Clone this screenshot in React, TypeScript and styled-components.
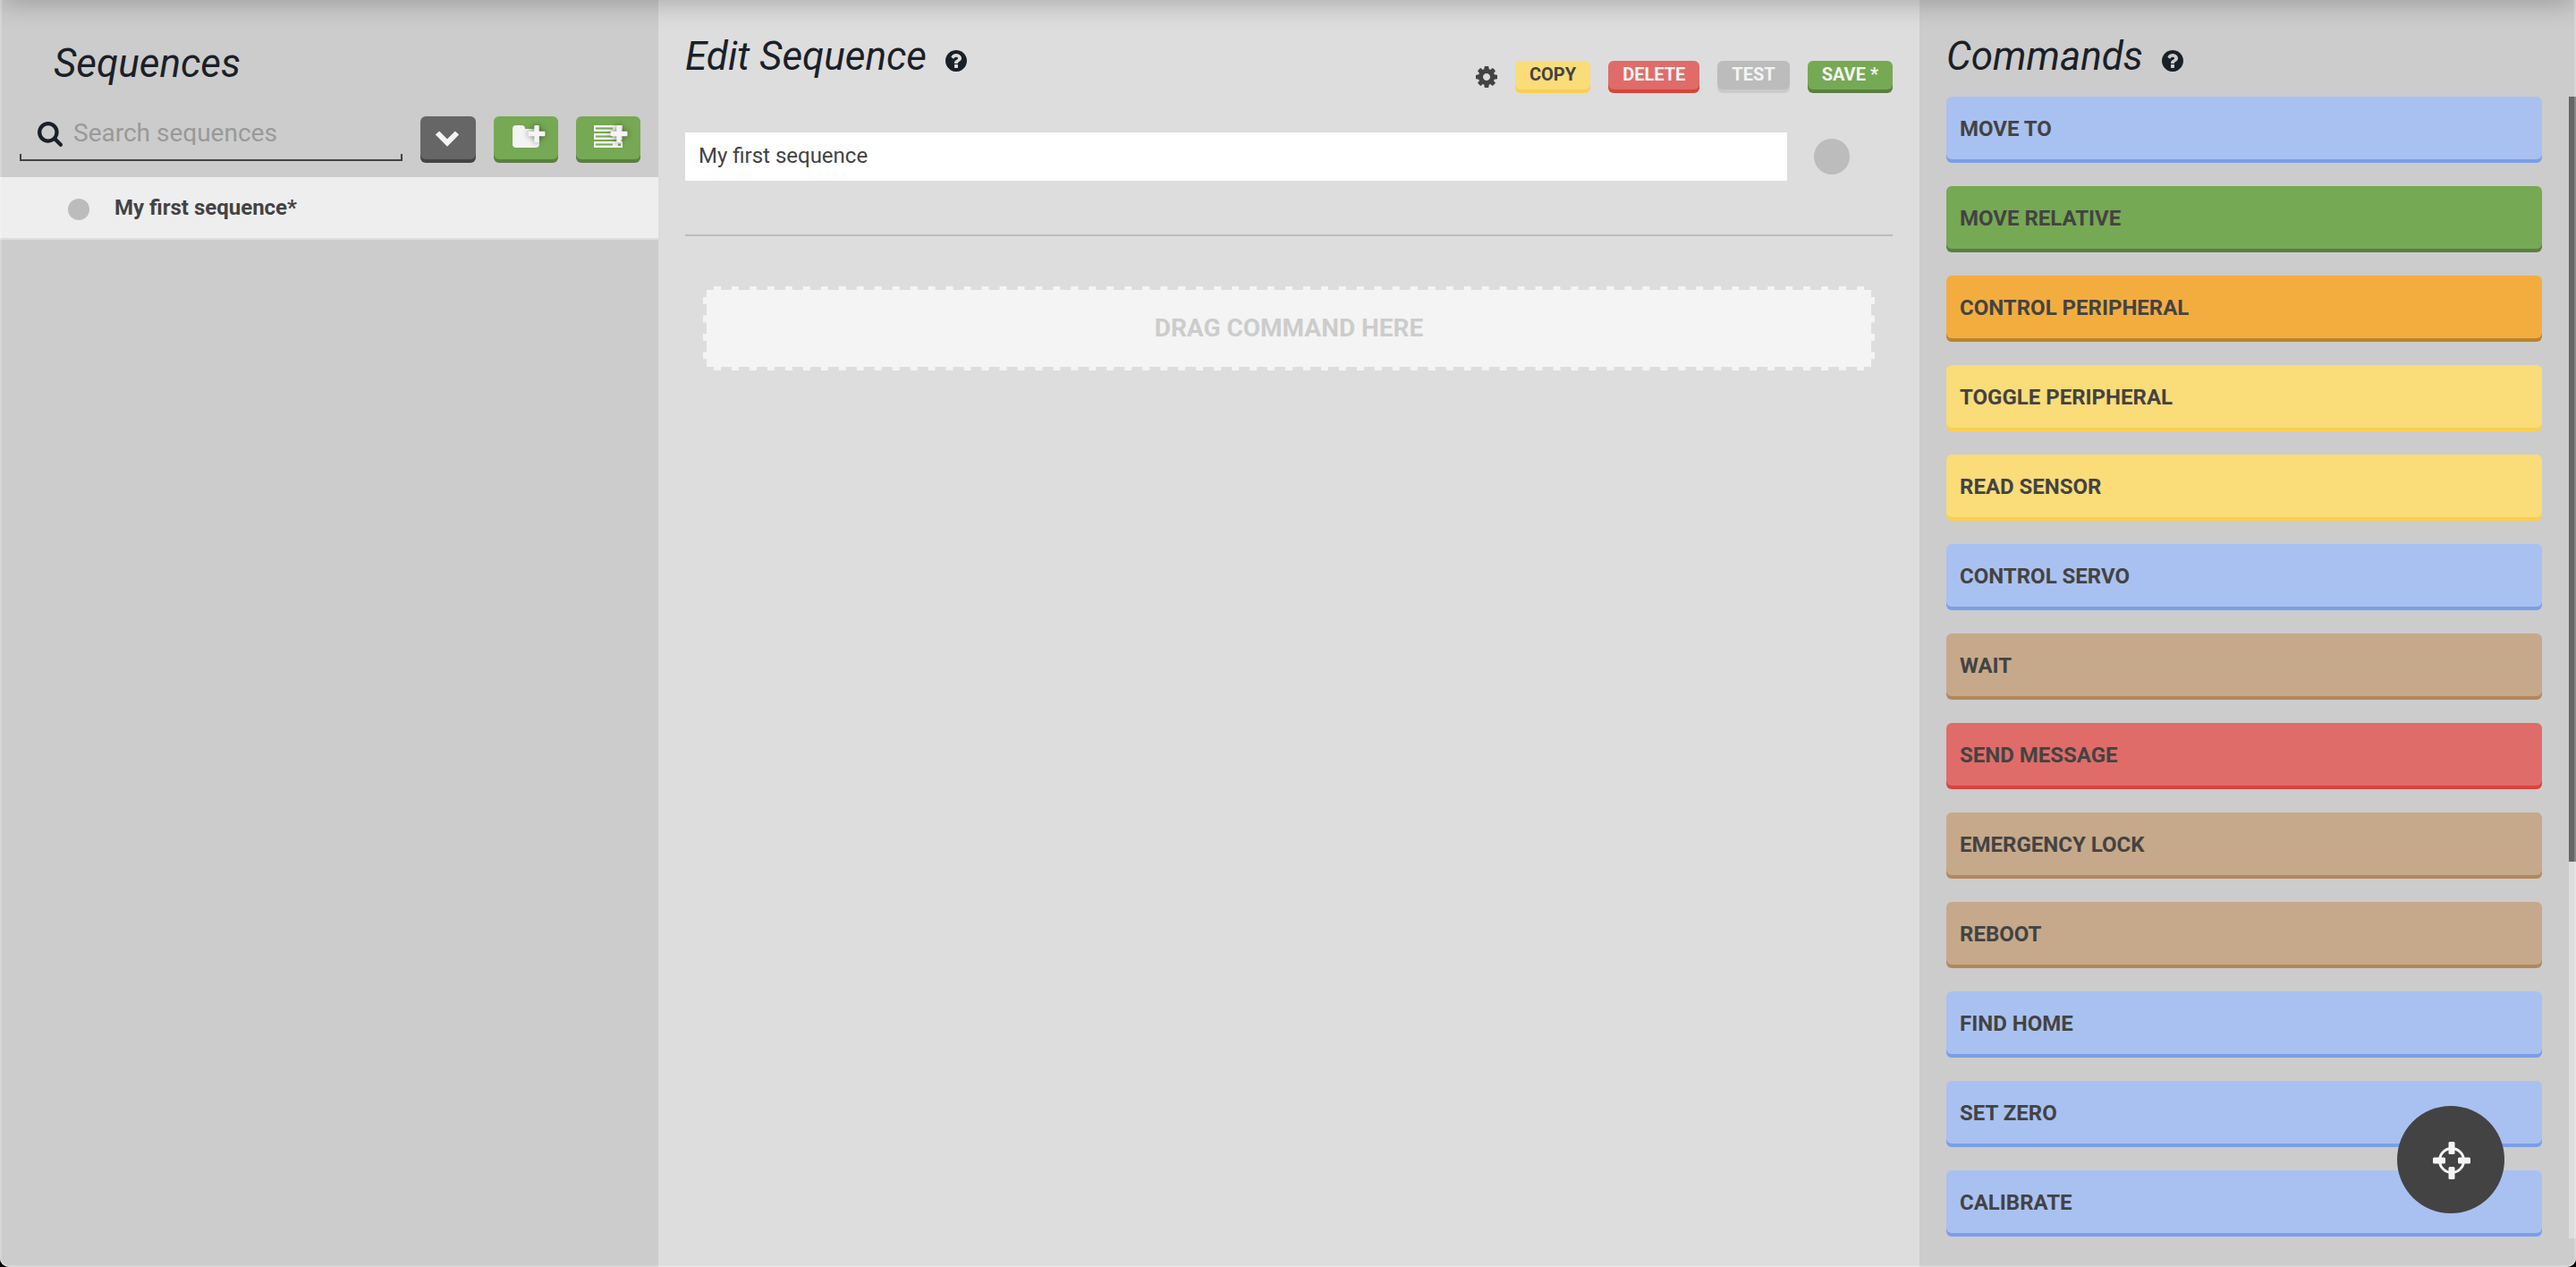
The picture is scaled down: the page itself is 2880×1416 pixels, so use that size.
import React, { useState } from "react";
import styled, { createGlobalStyle } from "styled-components";

const Global = createGlobalStyle`
  * { box-sizing: border-box; }
  html, body { margin: 0; background: #000; }
  body { font-family: Roboto, "Liberation Sans", sans-serif; color: #434343; font-size: 24px; line-height: 28px; overflow: hidden; }
  button, input { font: inherit; color: inherit; border: 0; margin: 0; }
  button { cursor: pointer; }
  svg { display: block; }
`;

const palette = {
  blue: ["#a9c1f0", "#7a9fe8"],
  green: ["#76a953", "#5a7f41"],
  orange: ["#f3ad3f", "#bc832c"],
  yellow: ["#fadc79", "#f9cf50"],
  brown: ["#c6a98a", "#b3875c"],
  red: ["#df6c69", "#d9433c"],
  gray: ["#bcbcbc", "#cacaca"],
  dark: ["#666666", "#434343"],
} as const;
type Tone = keyof typeof palette;

const Frame = styled.div`
  position: relative;
  display: grid;
  grid-template-columns: minmax(0, 736fr) minmax(0, 1410fr) minmax(0, 734fr);
  height: 100vh;
  overflow: hidden;
  background: #ddd;
  border-radius: 0 0 10px 10px;
`;

const NavShadow = styled.div`
  position: absolute;
  top: -20px;
  left: 0;
  right: 0;
  height: 20px;
  box-shadow: 0 0 30px 0 rgba(0, 0, 0, 0.34);
  pointer-events: none;
`;

const WindowEdge = styled.div`
  position: absolute;
  inset: 0;
  border: 2px solid rgba(255, 255, 255, 0.22);
  border-top: 0;
  border-radius: 0 0 10px 10px;
  pointer-events: none;
`;

const SidePanel = styled.aside`
  background: #ccc;
  min-width: 0;
`;

const SequencePanel = styled(SidePanel)`
  padding-top: 44px;
`;

const Title = styled.h2`
  margin: 0;
  font-size: 44px;
  line-height: 54px;
  font-weight: 400;
  font-style: italic;
  color: #1a2027;
  white-space: nowrap;
`;

const SequenceTitle = styled(Title)`
  padding-left: 60px;
`;

const Tools = styled.div`
  display: flex;
  align-items: flex-start;
  gap: 20px;
  padding: 32px 20px 18px 22px;
`;

const Search = styled.label`
  flex: 1;
  min-width: 0;
  display: flex;
  align-items: flex-start;
  gap: 12px;
  height: 50px;
  padding: 6px 0 0 20px;
  color: #1a2027;
  border-bottom: 2px solid #434343;
  background:
    linear-gradient(#434343, #434343) 0 100% / 2px 6px no-repeat,
    linear-gradient(#434343, #434343) 100% 100% / 2px 6px no-repeat;
`;

const SearchInput = styled.input`
  flex: 1;
  min-width: 0;
  height: 28px;
  padding: 0;
  margin-top: -2px;
  font-size: 28px;
  line-height: 28px;
  background: none;
  outline: none;
  color: #434343;
  &::placeholder { color: #999; opacity: 1; }
`;

const IconButton = styled.button<{ $tone: Tone; $wide?: boolean }>`
  display: flex;
  justify-content: center;
  align-items: center;
  width: ${(p) => (p.$wide ? 72 : 62)}px;
  height: 48px;
  padding: 0;
  border-radius: 6px;
  color: #f4f4f4;
  background: ${(p) => palette[p.$tone][0]};
  box-shadow: 0 4px 0 ${(p) => palette[p.$tone][1]};
`;

const SequenceList = styled.ul`
  list-style: none;
  margin: 0;
  padding: 0;
`;

const SequenceRow = styled.li`
  display: flex;
  align-items: center;
  height: 70px;
  padding: 4px 0 0 76px;
  background: #eee;
  border-bottom: 2px solid #ddd;
`;

const SequenceLink = styled.a`
  padding: 0 0 4px 28px;
  font-weight: 700;
  color: #434343;
  text-decoration: none;
`;

const ColorDot = styled.button<{ $size: number }>`
  width: ${(p) => p.$size}px;
  height: ${(p) => p.$size}px;
  padding: 0;
  border-radius: 50%;
  background: #bcbcbc;
`;

const Editor = styled.main`
  min-width: 0;
  padding: 36px 30px 0;
`;

const TitleBar = styled.header`
  display: flex;
  align-items: flex-start;
  justify-content: space-between;
  height: 72px;
`;

const TitleGroup = styled.div`
  display: flex;
  gap: 21px;
`;

const PlainButton = styled.button`
  display: flex;
  padding: 0;
  margin-top: 20px;
  height: 24px;
  background: none;
  color: #1a2027;
`;

const Actions = styled.div`
  display: flex;
  align-items: flex-start;
  gap: 20px;
  padding-top: 32px;
`;

const GearButton = styled.button`
  display: flex;
  padding: 6px 0 0;
  background: none;
`;

const ActionButton = styled.button<{ $tone: Tone; $dark?: boolean }>`
  height: 32px;
  padding: 0 16px 2px;
  border-radius: 6px;
  font-size: 20px;
  line-height: 30px;
  font-weight: 700;
  text-transform: uppercase;
  white-space: nowrap;
  color: ${(p) => (p.$dark ? "#434343" : "#f4f4f4")};
  background: ${(p) => palette[p.$tone][0]};
  box-shadow: 0 4px 0 ${(p) => palette[p.$tone][1]};
`;

const NameRow = styled.div`
  display: flex;
  align-items: center;
  gap: 30px;
  margin-top: 40px;
  padding-right: 48px;
`;

const NameInput = styled.input`
  flex: 1;
  min-width: 0;
  height: 54px;
  padding: 0 15px 2px;
  background: #fff;
  outline: none;
`;

const Rule = styled.hr`
  height: 2px;
  margin: 60px 0 56px;
  border: 0;
  background: #bcbcbc;
`;

const DropArea = styled.div`
  position: relative;
  margin: 0 20px;
  height: 94px;
  border: 4px solid transparent;
  background: #f4f4f4;
  background-clip: padding-box;
  display: flex;
  align-items: center;
  justify-content: center;
  font-size: 28px;
  line-height: 32px;
  font-weight: 700;
  color: #ccc;

  &::before, &::after { content: ""; position: absolute; }
  &::before {
    inset: -4px -4px -4px 8px;
    background:
      linear-gradient(90deg, #f4f4f4 40%, transparent 40%) 0 0 / 20px 4px,
      linear-gradient(90deg, #f4f4f4 40%, transparent 40%) 0 100% / 20px 4px;
    background-repeat: round no-repeat;
  }
  &::after {
    inset: 8px -4px -4px -4px;
    background:
      linear-gradient(#f4f4f4 40%, transparent 40%) 0 0 / 4px 20px,
      linear-gradient(#f4f4f4 40%, transparent 40%) 100% 0 / 4px 20px;
    background-repeat: no-repeat round;
  }
`;

const CommandPanel = styled(SidePanel)`
  padding: 36px 0 32px 30px;
  display: flex;
  flex-direction: column;
`;

const CommandScroll = styled.div`
  display: flex;
  gap: 30px;
  flex: 1;
  min-height: 0;
  margin-top: 18px;
  overflow: hidden;
`;

const CommandList = styled.div`
  flex: 1;
  min-width: 0;
  display: flex;
  flex-direction: column;
  gap: 30px;
`;

const CommandButton = styled.button<{ $tone: Tone }>`
  flex: none;
  height: 70px;
  padding: 2px 15px 0;
  border-radius: 6px;
  text-align: left;
  font-weight: 700;
  text-transform: uppercase;
  background: ${(p) => palette[p.$tone][0]};
  box-shadow: 0 4px 0 ${(p) => palette[p.$tone][1]};
`;

const ScrollTrack = styled.div`
  width: 8px;
  background: #ddd;
`;

const ScrollThumb = styled.div`
  height: 67%;
  background: #666;
`;

const MoveButton = styled.button`
  position: absolute;
  right: 80px;
  bottom: 60px;
  width: 120px;
  height: 120px;
  padding: 2px 0 0 1px;
  border-radius: 50%;
  display: flex;
  align-items: center;
  justify-content: center;
  background: #434343;
`;

const SearchIcon = () => (
  <svg width="28" height="28" viewBox="0 0 1664 1664" fill="currentColor" aria-hidden="true">
    <path d="M1152 704q0-185-131.5-316.500t-316.500-131.500-316.500 131.500-131.500 316.500 131.500 316.500 316.500 131.500 316.500-131.500 131.500-316.500zM1664 1536q0 52-38 90t-90 38q-54 0-90-38l-343-342q-179 124-399 124-143 0-273.500-55.500t-225-150-150-225-55.500-273.500 55.500-273.500 150-225 225-150 273.500-55.500 273.500 55.500 225 150 150 225 55.500 273.500q0 220-124 399l343 343q37 37 37 90z" />
  </svg>
);

const HelpIcon = () => (
  <svg width="24" height="24" viewBox="0 0 1536 1536" fill="currentColor" aria-hidden="true">
    <path d="M896 1248v-192q0-14-9-23t-23-9h-192q-14 0-23 9t-9 23v192q0 14 9 23t23 9h192q14 0 23-9t9-23zM1152 576q0-88-55.500-163t-138.500-116-170-41q-243 0-371 213-15 24 8 42l132 100q7 6 19 6 16 0 25-12 53-68 86-92 34-24 86-24 48 0 85.500 26t37.500 59q0 38-20 61t-68 45q-63 28-115.500 86.500t-52.500 125.500v36q0 14 9 23t23 9h192q14 0 23-9t9-23q0-19 21.500-49.500t54.500-49.500q32-18 49-28.500t46-35 44.500-48 28-60.500 12.500-81zM1536 768q0 209-103 385.500t-279.500 279.500-385.500 103-385.500-103-279.500-279.500-103-385.500 103-385.500 279.500-279.500 385.500-103 385.500 103 279.500 279.500 103 385.500z" />
  </svg>
);

const GearIcon = () => (
  <svg width="24" height="24" viewBox="0 0 1536 1536" fill="currentColor" aria-hidden="true">
    <path d="M1024 768q0-106-75-181t-181-75-181 75-75 181 75 181 181 75 181-75 75-181zM1536 659v222q0 12-8 23t-20 13l-185 28q-19 54-39 91 35 50 107 138 10 12 10 25t-9 23q-27 37-99 108t-94 71q-12 0-26-9l-138-108q-44 23-91 38-16 136-29 186-7 28-36 28h-222q-14 0-24.500-8.500t-11.500-21.500l-28-184q-49-16-90-37l-141 107q-10 9-25 9-14 0-25-11-126-114-165-168-7-10-7-23 0-12 8-23 15-21 51-66.500t54-70.500q-27-50-41-99l-183-27q-13-2-21-12.500t-8-23.500v-222q0-12 8-23t19-13l186-28q14-46 39-92-40-57-107-138-10-12-10-24 0-10 9-23 26-36 98.500-107.500t94.500-71.500q13 0 26 10l138 107q44-23 91-38 16-136 29-186 7-28 36-28h222q14 0 24.500 8.500t11.500 21.500l28 184q49 16 90 37l142-107q9-9 24-9 13 0 25 10 129 119 165 170 7 8 7 22 0 12-8 23-15 21-51 66.500t-54 70.500q26 50 41 98l183 28q13 2 21 12.500t8 23.500z" />
  </svg>
);

const ChevronIcon = () => (
  <svg width="30" height="20" viewBox="0 0 30 20" aria-hidden="true">
    <path d="M3 4.500l11 11L25 4.500" fill="none" stroke="currentColor" strokeWidth="6" />
  </svg>
);

const PlusShape = styled.g`
  filter: drop-shadow(0 0 3px rgba(0, 0, 0, 0.5));
`;

const PlusMark = () => (
  <PlusShape fill="currentColor">
    <path d="M26.500 0h3q1.200 0 1.200 1.200V6.800h5.600q1.200 0 1.200 1.200v3q0 1.200-1.200 1.200h-5.600v5.800q0 1.200-1.200 1.200h-3q-1.200 0-1.200-1.200v-5.800h-5.600q-1.200 0-1.200-1.200v-3q0-1.200 1.200-1.200h5.600V1.200q0-1.200 1.200-1.200z" />
  </PlusShape>
);

const FolderPlusIcon = () => (
  <svg width="32" height="28" viewBox="0 0 32 28" overflow="visible" aria-hidden="true">
    <path d="M5 0h6q4 0 4 4h12q4 0 4 4v13q0 4-4 4H5q-4 0-4-4V4q0-4 4-4z" fill="currentColor" />
    <PlusMark />
  </svg>
);

const ListPlusIcon = () => (
  <svg width="32" height="28" viewBox="0 0 32 28" overflow="visible" aria-hidden="true">
    <path
      fillRule="evenodd"
      d="M0 0h32v7H0zM2 2.500v2h19v-2zM0 9h32v7H0zM2 11.500v2h19v-2zM0 18h32v7H0zM2 20.500v2h19v-2zM27 20.500v2.500h3v-2.500z"
      fill="currentColor"
    />
    <PlusMark />
  </svg>
);

const CrosshairIcon = () => (
  <svg width="42" height="42" viewBox="0 0 42 42" fill="#f4f4f4" aria-hidden="true">
    <circle cx="21" cy="21" r="13.500" fill="none" stroke="#f4f4f4" strokeWidth="3" />
    <rect x="17.500" y="0" width="7" height="14" rx="1.500" />
    <rect x="17.500" y="28" width="7" height="14" rx="1.500" />
    <rect x="0" y="17.500" width="14" height="7" rx="1.500" />
    <rect x="28" y="17.500" width="14" height="7" rx="1.500" />
  </svg>
);

const commands: [string, Tone][] = [
  ["Move to", "blue"],
  ["Move relative", "green"],
  ["Control peripheral", "orange"],
  ["Toggle peripheral", "yellow"],
  ["Read sensor", "yellow"],
  ["Control servo", "blue"],
  ["Wait", "brown"],
  ["Send message", "red"],
  ["Emergency lock", "brown"],
  ["Reboot", "brown"],
  ["Find home", "blue"],
  ["Set zero", "blue"],
  ["Calibrate", "blue"],
];

export default function App() {
  const [name, setName] = useState("My first sequence");
  const [query, setQuery] = useState("");
  return (
    <>
      <Global />
      <Frame>
        <SequencePanel>
          <SequenceTitle>Sequences</SequenceTitle>
          <Tools>
            <Search>
              <SearchIcon />
              <SearchInput
                aria-label="Search sequences"
                placeholder="Search sequences"
                value={query}
                onChange={(e) => setQuery(e.target.value)}
              />
            </Search>
            <IconButton $tone="dark" aria-label="Toggle folders"><ChevronIcon /></IconButton>
            <IconButton $tone="green" $wide aria-label="Add folder"><FolderPlusIcon /></IconButton>
            <IconButton $tone="green" $wide aria-label="Add sequence"><ListPlusIcon /></IconButton>
          </Tools>
          <SequenceList>
            <SequenceRow>
              <ColorDot $size={24} aria-label="Sequence color" />
              <SequenceLink href="#sequence">{name}*</SequenceLink>
            </SequenceRow>
          </SequenceList>
        </SequencePanel>

        <Editor>
          <TitleBar>
            <TitleGroup>
              <Title>Edit Sequence</Title>
              <PlainButton aria-label="Help"><HelpIcon /></PlainButton>
            </TitleGroup>
            <Actions>
              <GearButton aria-label="Settings"><GearIcon /></GearButton>
              <ActionButton $tone="yellow" $dark>Copy</ActionButton>
              <ActionButton $tone="red">Delete</ActionButton>
              <ActionButton $tone="gray">Test</ActionButton>
              <ActionButton $tone="green">Save *</ActionButton>
            </Actions>
          </TitleBar>
          <NameRow>
            <NameInput aria-label="Sequence name" value={name} onChange={(e) => setName(e.target.value)} />
            <ColorDot $size={40} aria-label="Color" />
          </NameRow>
          <Rule />
          <DropArea>DRAG COMMAND HERE</DropArea>
        </Editor>

        <CommandPanel>
          <TitleGroup>
            <Title>Commands</Title>
            <PlainButton aria-label="Help"><HelpIcon /></PlainButton>
          </TitleGroup>
          <CommandScroll>
            <CommandList>
              {commands.map(([label, tone]) => (
                <CommandButton key={label} $tone={tone}>{label}</CommandButton>
              ))}
            </CommandList>
            <ScrollTrack><ScrollThumb /></ScrollTrack>
          </CommandScroll>
        </CommandPanel>

        <MoveButton aria-label="Move controls"><CrosshairIcon /></MoveButton>
        <NavShadow />
        <WindowEdge />
      </Frame>
    </>
  );
}
